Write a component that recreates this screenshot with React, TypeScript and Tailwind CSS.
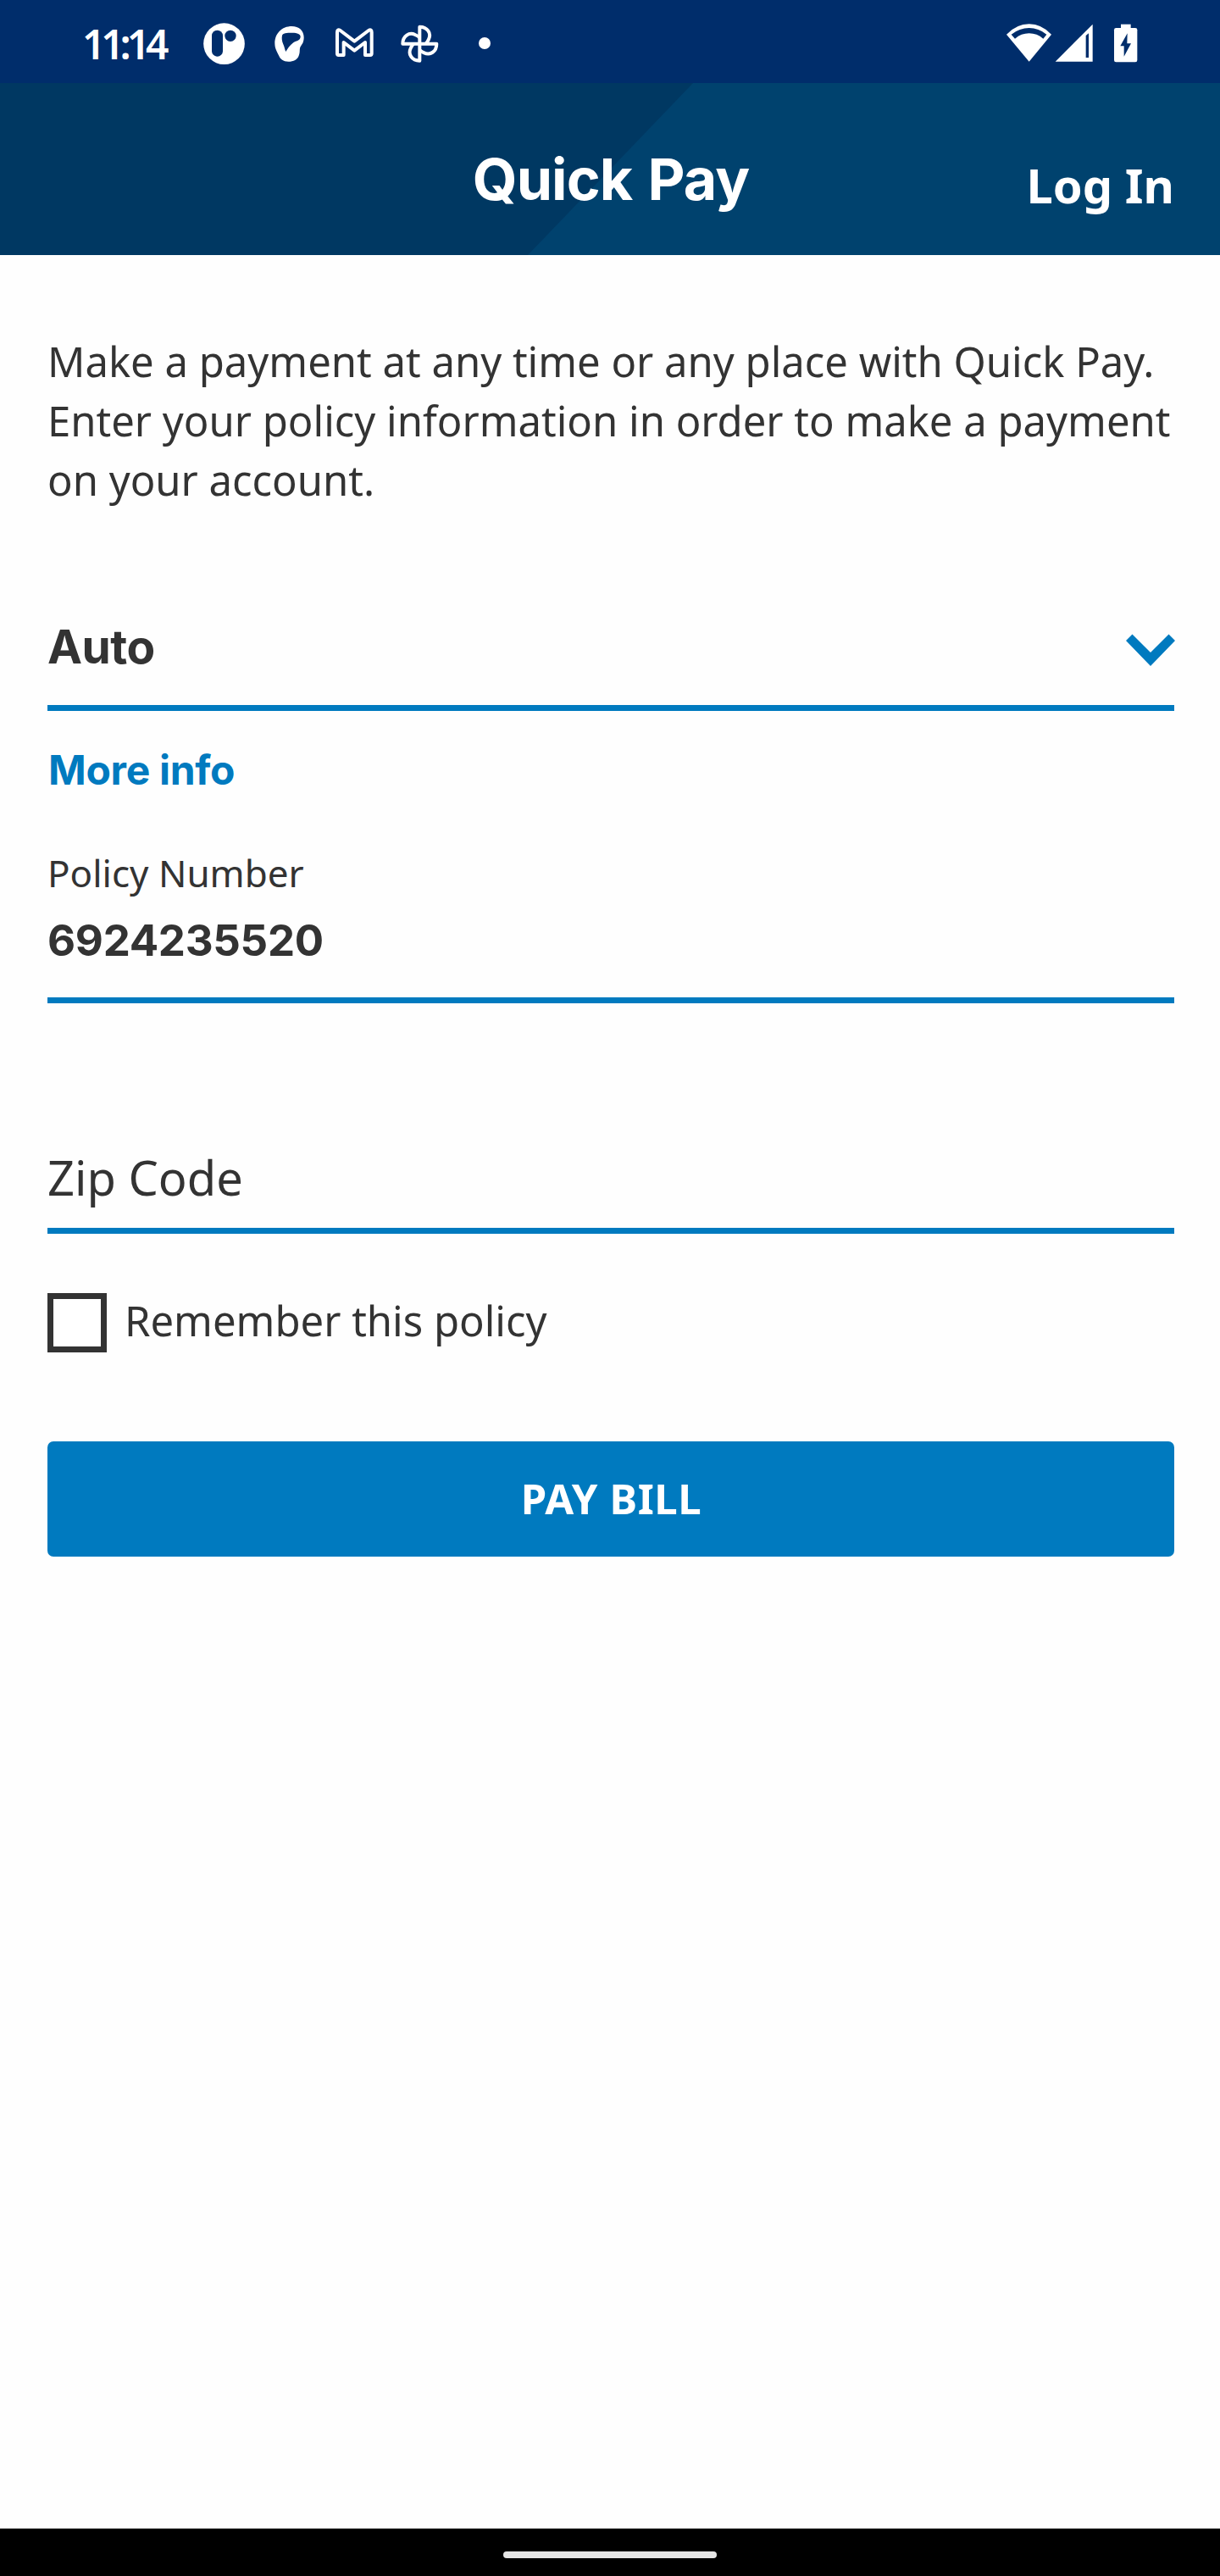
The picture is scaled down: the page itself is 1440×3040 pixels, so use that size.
import React from "react";

const NAVY = "#002d6b";

function ParallelIcon() {
  return (
    <svg className="h-[98px] w-[51px]" viewBox="27 -60 153 294" fill="white">
      <circle cx="103.5" cy="95" r="73" />
      <rect x="60" y="47" width="39" height="93" rx="19.5" fill={NAVY} />
      <circle cx="126" cy="67" r="20" fill={NAVY} />
    </svg>
  );
}

function BlobIcon() {
  return (
    <svg className="ml-[33px] h-[98px] w-[37px]" viewBox="279 -60 111 294" fill="white">
      <path d="M343 33C369 33 386 49 386 72C386 90 380 96 374 105C369 116 374 122 368 137C363 151 350 158 331 158C313 158 303 150 298 138C291 123 283 113 283 93C283 59 308 33 343 33Z" />
      <path
        fill={NAVY}
        d="M309 66C311 57 324 56 345 56C363 56 375 61 374 71C372 85 358 83 347 92C336 101 330 109 322 123C318 116 318 108 313 97C308 85 307 74 309 66Z"
      />
    </svg>
  );
}

function MailIcon() {
  return (
    <svg
      className="ml-[35px] h-[98px] w-[47px]"
      viewBox="495 -60 141 294"
      fill="none"
      stroke="white"
      strokeWidth="12"
      strokeLinejoin="round"
    >
      <path d="M504 130V54Q504 42 515 48L565 86L615 48Q626 42 626 54V130Q626 135 621 135H603V90L565 119L527 90V135H509Q504 135 504 130Z" />
    </svg>
  );
}

function PinwheelIcon() {
  const petal = "M796 95V35C824 35 838 58 828 79Q824 88 818 95";
  return (
    <svg
      className="ml-[30px] h-[98px] w-[47px]"
      viewBox="726 -60 141 294"
      fill="none"
      stroke="white"
      strokeWidth="12"
      strokeLinejoin="round"
    >
      <path d={petal} />
      <path d={petal} transform="rotate(90 796 95)" />
      <path d={petal} transform="rotate(180 796 95)" />
      <path d={petal} transform="rotate(270 796 95)" />
    </svg>
  );
}

function WifiIcon() {
  return (
    <svg className="h-[98px] w-[55px]" viewBox="81 0 165 294" fill="white">
      <path d="M164 218L84 122Q120 85 164 85Q208 85 243 122Z" />
      <path fill={NAVY} d="M101 122Q130 99 164 99Q198 99 226 122L214 137Q192 118 164 118Q136 118 114 137Z" />
    </svg>
  );
}

function SignalIcon() {
  return (
    <svg className="ml-[3px] h-[98px] w-[46px]" viewBox="255 0 138 294" fill="white">
      <path d="M257 218L389 86V218Z" />
      <path fill={NAVY} d="M365 126L375 118V204H365Z" />
    </svg>
  );
}

function BatteryIcon() {
  return (
    <svg className="ml-[23px] h-[98px] w-[29px]" viewBox="462 0 87 294" fill="white">
      <rect x="489" y="86" width="35" height="20" />
      <rect x="465" y="99" width="82" height="121" rx="7" />
      <path fill={NAVY} d="M512 118L487 163H500V200L525 154H511Z" />
    </svg>
  );
}

function StatusBar() {
  return (
    <div className="flex h-[98px] items-center justify-between bg-[#002d6b] pr-[97px] pl-[97px]">
      <div className="flex items-center">
        <span className="w-[142px] pt-[5px] text-[48px] leading-[60px] font-semibold tracking-[-5.15px] text-white">
          11:14
        </span>
        <ParallelIcon />
        <BlobIcon />
        <MailIcon />
        <PinwheelIcon />
        <span className="mt-[4px] ml-[46px] size-[14px] rounded-full bg-white" />
      </div>
      <div className="flex items-center">
        <WifiIcon />
        <SignalIcon />
        <BatteryIcon />
      </div>
    </div>
  );
}

function Header() {
  return (
    <header className="relative h-[203px] bg-[#00426e]">
      <div className="absolute inset-0 bg-[#003862] [clip-path:polygon(0_0,818px_0,623px_100%,0_100%)]" />
      <div className="relative grid grid-cols-3 items-start px-[54px] text-white">
        <h1 className="col-start-2 pt-[73px] pl-[2px] text-center font-[Inter,sans-serif] text-[68px] leading-[80px] font-bold tracking-[-0.9px] [word-spacing:3px] whitespace-nowrap">
          Quick Pay
        </h1>
        <a className="pt-[80px] text-right text-[56px] leading-[80px] font-bold whitespace-nowrap">Log In</a>
      </div>
    </header>
  );
}

export default function App() {
  return (
    <div className="flex h-[3040px] w-[1440px] flex-col overflow-hidden bg-[#fefefe] font-['Noto_Sans',sans-serif] text-[#333333]">
      <StatusBar />
      <Header />
      <main className="flex flex-1 flex-col px-[56px] pr-[54px] pt-[90px]">
        <p className="text-[49px] leading-[70px] whitespace-nowrap">
          Make a payment at any time or any place with Quick Pay.
          <br />
          Enter your policy information in order to make a payment
          <br />
          on your account.
        </p>

        <div className="mt-[122px] flex items-start justify-between border-b-[7px] border-[#007abf] pb-[29px]">
          <span className="font-[Inter,sans-serif] text-[55px] leading-[80px] font-bold tracking-[-0.5px]">Auto</span>
          <svg className="mt-[24px] -mr-[2px] h-[40px] w-[60px]" viewBox="0 0 60 40" fill="#007abf">
            <path d="M1 9L8.500 1.500L30 23L51.500 1.500L59 9L30 39Z" />
          </svg>
        </div>
        <a className="mt-[40px] pl-px font-[Inter,sans-serif] text-[48px] leading-[60px] font-bold tracking-[-0.3px] text-[#007abf]">
          More info
        </a>

        <div className="mt-[61px] flex flex-col border-b-[7px] border-[#007abf] pb-[32px]">
          <label className="text-[44px] leading-[60px]">Policy Number</label>
          <span className="mt-[15px] font-[Inter,sans-serif] text-[51px] leading-[70px] font-bold tracking-[-0.3px]">
            6924235520
          </span>
        </div>

        <div className="mt-[165px] border-b-[7px] border-[#007abf] pb-[20px] text-[56px] leading-[80px]">Zip Code</div>

        <div className="mt-[70px] flex h-[70px] items-start">
          <span className="size-[70px] border-[7px] border-[#333333] bg-white" />
          <span className="-mt-[3px] ml-[21px] text-[49px] leading-[70px]">Remember this policy</span>
        </div>

        <button className="mt-[105px] h-[136px] rounded-[7px] bg-[#007abf] pb-[1px] pl-[1px] text-[49px] font-bold tracking-[0.6px] text-white">
          PAY BILL
        </button>
      </main>
      <div className="flex h-[56px] items-center justify-center bg-black">
        <div className="mt-[6px] h-[8px] w-[252px] rounded-full bg-[#e6e6e6]" />
      </div>
    </div>
  );
}
